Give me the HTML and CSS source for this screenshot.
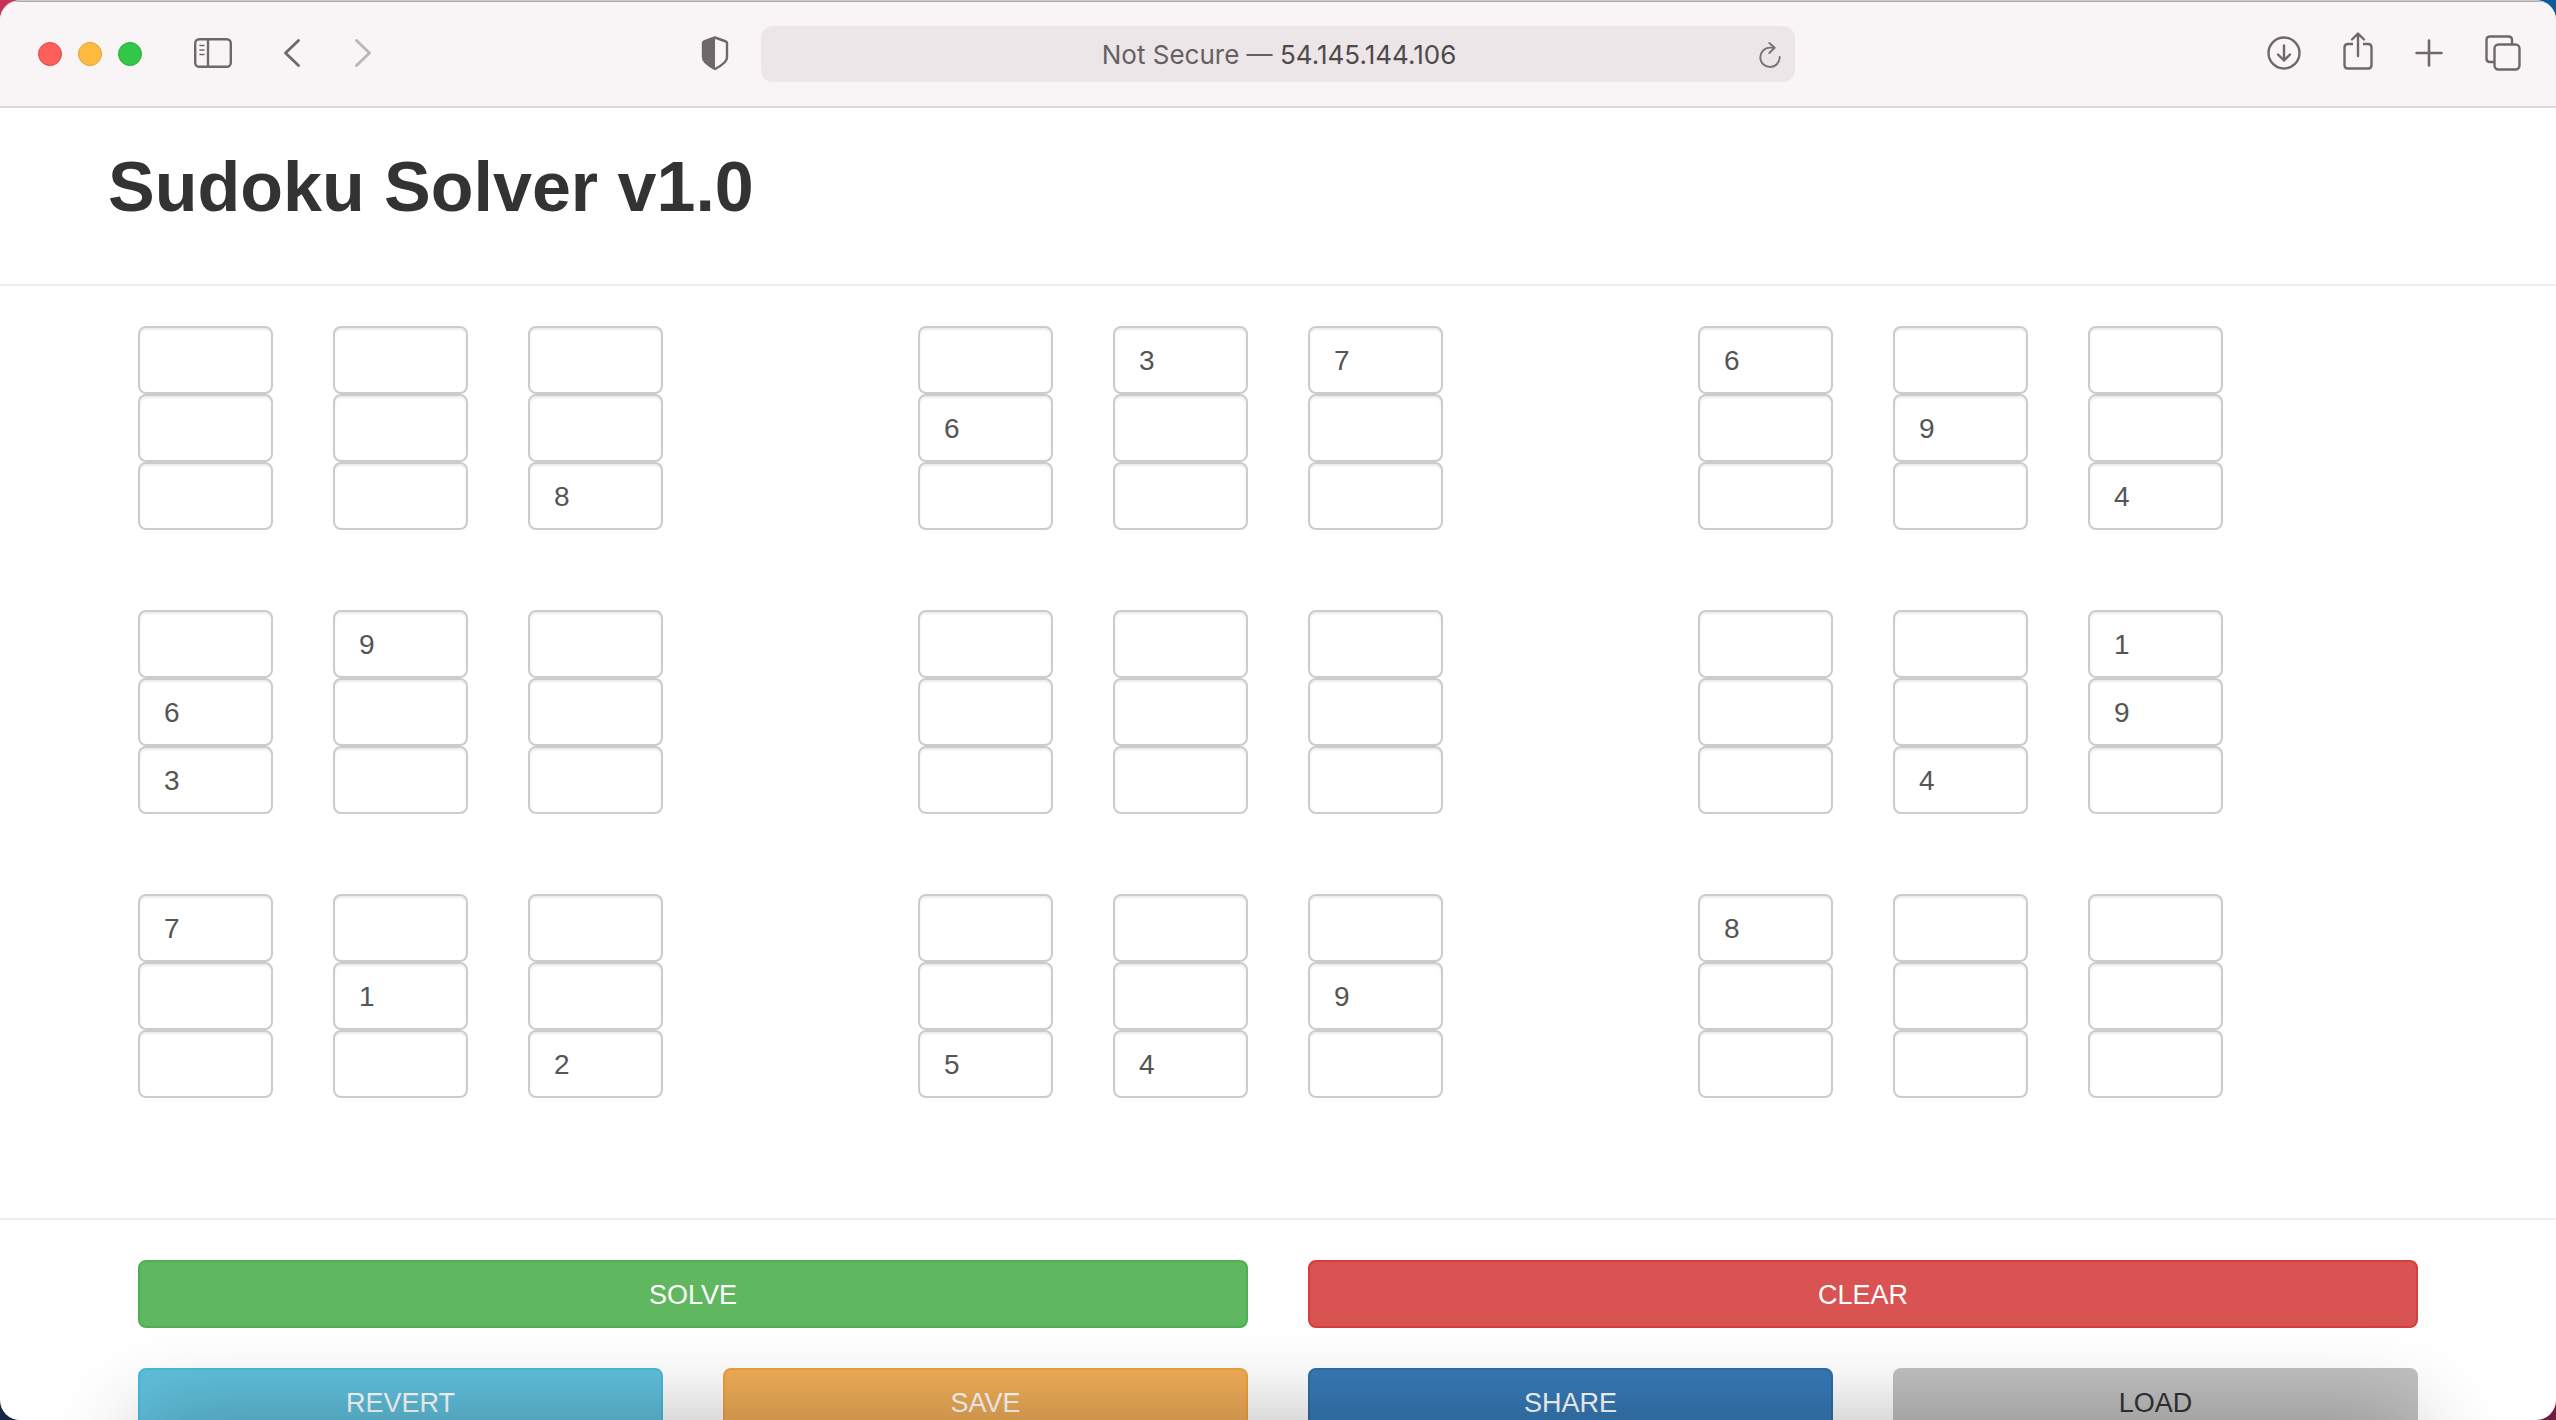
FILE: index.html
```html
<!DOCTYPE html>
<html lang="en">
<head>
<meta charset="utf-8">
<title>Sudoku Solver v1.0</title>
<link rel="stylesheet" href="styles.css">
</head>
<body>
<div class="window">
  <header class="toolbar">
    <div class="tools tools-left">
      <div class="lights">
        <button class="light light-close" aria-label="Close"></button>
        <button class="light light-min" aria-label="Minimize"></button>
        <button class="light light-max" aria-label="Zoom"></button>
      </div>
      <button class="tool" aria-label="Sidebar"><svg width="38" height="30" viewBox="0 0 38 30" fill="none" stroke="currentColor" stroke-width="2.4" stroke-linecap="round"><rect x="1.2" y="1.2" width="35.6" height="27.6" rx="4"/><path d="M14 1.5v27"/><path d="M6 7.500h4M6 12h4M6 16.500h4" stroke-width="1.6"/></svg></button>
      <div class="history">
        <button class="tool" aria-label="Back"><svg width="16" height="28" viewBox="0 0 16 28" fill="none" stroke="currentColor" stroke-width="2.8" stroke-linecap="round" stroke-linejoin="round"><path d="M14.500 1.500 1.500 14l13 12.500"/></svg></button>
        <button class="tool tool-off" aria-label="Forward" disabled><svg width="16" height="28" viewBox="0 0 16 28" fill="none" stroke="currentColor" stroke-width="2.8" stroke-linecap="round" stroke-linejoin="round"><path d="M1.500 1.500 14.500 14l-13 12.500"/></svg></button>
      </div>
      <button class="tool shield" aria-label="Privacy report"><svg width="28" height="34" viewBox="0 0 28 34"><path d="M14 1.500 25 5.500Q26 5.900 26 7v14q0 3-2 5-4 4-10 7-6-3-10-7-2-2-2-5V7Q2 5.900 3 5.500Z" fill="none" stroke="currentColor" stroke-width="2.4" stroke-linejoin="round"/><path d="M14 1.500V33q-6-3-10-7-2-2-2-5V7q0-1.100 1-1.500Z" fill="currentColor"/></svg></button>
    </div>
    <div class="address">
      <p class="address-text">Not Secure — <span class="host">54.145.144.106</span></p>
      <button class="tool reload" aria-label="Reload"><svg width="22" height="26" viewBox="0 0 22 26" fill="none" stroke="currentColor" stroke-width="1.900" stroke-linecap="round" stroke-linejoin="round"><path d="M20.700 15A9.700 9.700 0 1 1 11 5.600h4.500M10.300 1l5.400 4.700-5.400 5.300"/></svg></button>
    </div>
    <div class="tools tools-right">
      <button class="tool" aria-label="Downloads"><svg width="34" height="34" viewBox="0 0 34 34" fill="none" stroke="currentColor" stroke-width="2.400" stroke-linecap="round" stroke-linejoin="round"><circle cx="17" cy="17" r="15.500"/><path d="M17 9.500v15M11 18.500l6 6 6-6"/></svg></button>
      <button class="tool" aria-label="Share page"><svg width="30" height="41" viewBox="0 0 30 41" fill="none" stroke="currentColor" stroke-width="2.400" stroke-linecap="round" stroke-linejoin="round"><path d="M10 12H5q-3.500 0-3.500 3.500V33q0 3.500 3.500 3.500h20q3.500 0 3.500-3.500V15.500Q28.500 12 25 12h-5" stroke-linecap="butt"/><path d="M15 24V2M9 7.500l6-6 6 6"/></svg></button>
      <button class="tool" aria-label="New tab"><svg width="28" height="28" viewBox="0 0 28 28" fill="none" stroke="currentColor" stroke-width="2.600" stroke-linecap="round"><path d="M14 1.500v25M1.500 14h25"/></svg></button>
      <button class="tool" aria-label="Tab overview"><svg width="36" height="36" viewBox="0 0 36 36" fill="none" stroke="currentColor" stroke-width="2.400"><rect x="9.500" y="9.500" width="25" height="25" rx="4"/><path d="M9.500 27H5q-3.500 0-3.500-3.500V5Q1.500 1.500 5 1.500h18.500Q27 1.500 27 5v4.500"/></svg></button>
    </div>
  </header>
  <main class="page">
    <div class="container"><h1 class="title">Sudoku Solver v1.0</h1></div>
    <hr class="rule">
    <form class="container" id="board">
    </form>
    <hr class="rule">
    <div class="container actions">
      <button class="btn btn-half btn-solve">SOLVE</button>
      <button class="btn btn-half btn-clear">CLEAR</button>
      <button class="btn btn-revert">REVERT</button>
      <button class="btn btn-save">SAVE</button>
      <button class="btn btn-share">SHARE</button>
      <button class="btn btn-load">LOAD</button>
    </div>
  </main>
  <div class="shade"></div>
</div>
<script src="board.js"></script>
</body>
</html>
```
FILE: board.js
```
// One string per row of the puzzle; a dot is an empty cell.
const puzzle = [
  "....376..",
  "...6...9.",
  "..8.....4",
  ".9......1",
  "6.......9",
  "3......4.",
  "7.....8..",
  ".1...9...",
  "..254....",
];
const board = document.getElementById("board");
for (let band = 0; band < 3; band++) {
  const bandEl = document.createElement("div");
  bandEl.className = "band";
  for (let box = 0; box < 3; box++) {
    const boxEl = document.createElement("div");
    boxEl.className = "box";
    for (let i = 0; i < 9; i++) {
      const row = band * 3 + Math.floor(i / 3);
      const col = box * 3 + (i % 3);
      const cell = document.createElement("input");
      cell.type = "text";
      cell.className = "cell";
      cell.maxLength = 1;
      cell.setAttribute("aria-label", `Row ${row + 1}, column ${col + 1}`);
      cell.value = puzzle[row][col].replace(".", "");
      boxEl.append(cell);
    }
    bandEl.append(boxEl);
  }
  board.append(bandEl);
}
```
FILE: styles.css
```css
* { box-sizing: border-box; }
html { height: 100%; }
body {
  margin: 0;
  height: 100%;
  overflow: hidden;
  background: linear-gradient(90deg, #c8325a 50%, #0d5c9c 50%) top / 100% 50% no-repeat,
    linear-gradient(90deg, #142746 50%, #6b1e42 50%) bottom / 100% 50% no-repeat;
  font-family: "Liberation Sans", Arial, sans-serif;
  font-size: 28px;
  line-height: 40px;
  color: #333;
}
button { font: inherit; cursor: pointer; }
.window {
  position: relative;
  height: 100%;
  overflow: hidden;
  border-radius: 20px;
  border-top: 1px solid #d0cbcd;
  background: #fff;
}
.toolbar {
  display: grid;
  grid-template-columns: 1fr minmax(0, 1034px) 1fr;
  height: 107px;
  padding-bottom: 1px;
  align-items: center;
  background: #f9f4f6;
  border-top: 1px solid #aba7a9;
  border-bottom: 2px solid #dfdbdd;
}
.tools { display: flex; align-items: center; color: #6e686a; }
.tools-left { padding: 0 32px 0 38px; }
.tools-right { justify-content: flex-end; gap: 42px; padding-right: 35px; }
.tool { display: flex; padding: 0 0 2px; border: 0; background: none; color: inherit; }
.tool-off { color: #bab5b7; }
.lights { display: flex; gap: 16px; margin-right: 52px; }
.light { width: 24px; height: 24px; padding: 0; border: 1px solid; border-radius: 50%; }
.light-close { background: #fe5f5a; border-color: #e04743; }
.light-min { background: #fdbb40; border-color: #dea035; }
.light-max { background: #34c84a; border-color: #2aab3b; }
.history { display: flex; gap: 55px; margin-left: 52px; }
.shield { margin-left: auto; }
.address {
  display: flex;
  align-items: center;
  height: 56px;
  padding-right: 14px;
  border-radius: 12px;
  background: #ece6e8;
}
.address-text {
  flex: 1;
  margin: 0;
  padding: 3px 0 0 38px;
  text-align: center;
  font-family: Inter, sans-serif;
  font-size: 26px;
  color: #656163;
}
.host { color: #4d4a4b; }
.reload { padding: 2px 0 0; color: #7a7577; }
.page { padding-top: 40px; }
.container { width: 100%; max-width: 2340px; margin: 0 auto; }
.title { margin: 0 0 57px; font-size: 70px; line-height: 79px; font-weight: 700; }
.rule { height: 2px; margin: 0 0 40px; border: 0; background: #eee; }
.band { display: grid; grid-template-columns: repeat(3, 1fr); margin-bottom: 80px; }
.band:last-child { margin-bottom: 120px; }
.box {
  display: grid;
  grid-template-columns: repeat(3, 1fr);
  column-gap: 60px;
  width: 75%;
  padding: 0 30px;
}
.cell {
  width: 100%;
  height: 68px;
  padding: 13px 24px 11px;
  border: 2px solid #ccc;
  border-radius: 8px;
  background: #fff;
  box-shadow: inset 0 2px 2px rgba(0, 0, 0, 0.075);
  font: inherit;
  color: #555;
}
.actions {
  display: grid;
  grid-template-columns: repeat(4, 1fr);
  gap: 40px 60px;
  padding: 0 30px;
}
.btn {
  height: 68px;
  padding: 2px 0 0;
  border: 2px solid;
  border-radius: 8px;
  font-size: 27px;
  color: #fff;
}
.btn-half { grid-column: span 2; }
.btn-solve { background: #5fb760; border-color: #4eae50; }
.btn-clear { background: #d85351; border-color: #d43f3c; }
.btn-revert { background: #60c0dc; border-color: #4ab8db; }
.btn-save { background: #f0ad57; border-color: #eea23b; }
.btn-share { background: #367ab7; border-color: #2f6da5; }
.btn-load { background: #c0c0c0; border-color: #c0c0c0; color: #333; }
.shade {
  position: absolute;
  top: 100%;
  left: 140px;
  right: 140px;
  height: 80px;
  box-shadow: 0 0 90px rgba(0, 0, 0, 0.3);
  pointer-events: none;
}
```
